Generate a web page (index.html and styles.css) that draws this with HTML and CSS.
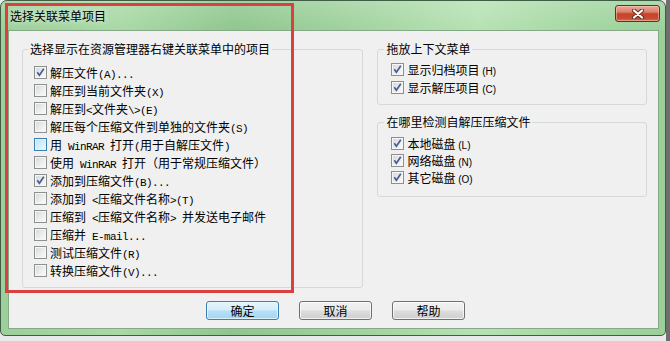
FILE: index.html
```html
<!DOCTYPE html>
<html lang="zh-CN">
<head>
<meta charset="utf-8">
<title>选择关联菜单项目</title>
<link rel="stylesheet" href="styles.css">
</head>
<body>
<div class="window">
  <div class="titlebar">
    <span class="title">选择关联菜单项目</span>
    <span class="close"><svg width="14" height="10" viewBox="0 0 14 10"><path d="M3 1.5 L11 8.5 M11 1.5 L3 8.5" stroke="#5a2a22" stroke-width="4" stroke-linecap="round"/><path d="M3 1.5 L11 8.5 M11 1.5 L3 8.5" stroke="#fff" stroke-width="2.2" stroke-linecap="round"/></svg></span>
  </div>
  <div class="client">
    <div class="groups">
      <fieldset class="group left">
        <legend>选择显示在资源管理器右键关联菜单中的项目</legend>
        <div class="row"><span class="cb on"><svg viewBox="0 0 11 11"><path d="M2.3 5.2 L4.4 8.3 L8.8 1.8"/></svg></span><span>解压文件<span class="l">(A)...</span></span></div>
        <div class="row"><span class="cb"></span><span>解压到当前文件夹<span class="l">(X)</span></span></div>
        <div class="row"><span class="cb"></span><span>解压到<span class="l">&lt;</span>文件夹<span class="l">\&gt;(E)</span></span></div>
        <div class="row"><span class="cb"></span><span>解压每个压缩文件到单独的文件夹<span class="l">(S)</span></span></div>
        <div class="row"><span class="cb hot"></span><span>用<span class="l"> WinRAR </span>打开<span class="l">(</span>用于自解压文件<span class="l">)</span></span></div>
        <div class="row"><span class="cb"></span><span>使用<span class="l"> WinRAR </span>打开（用于常规压缩文件）</span></div>
        <div class="row"><span class="cb on"><svg viewBox="0 0 11 11"><path d="M2.3 5.2 L4.4 8.3 L8.8 1.8"/></svg></span><span>添加到压缩文件<span class="l">(B)...</span></span></div>
        <div class="row"><span class="cb"></span><span>添加到<span class="l"> &lt;</span>压缩文件名称<span class="l">&gt;(T)</span></span></div>
        <div class="row"><span class="cb"></span><span>压缩到<span class="l"> &lt;</span>压缩文件名称<span class="l">&gt; </span>并发送电子邮件</span></div>
        <div class="row"><span class="cb"></span><span>压缩并<span class="l"> E-mail...</span></span></div>
        <div class="row"><span class="cb"></span><span>测试压缩文件<span class="l">(R)</span></span></div>
        <div class="row"><span class="cb"></span><span>转换压缩文件<span class="l">(V)...</span></span></div>
      </fieldset>
      <div class="right">
        <fieldset class="group drag">
          <legend>拖放上下文菜单</legend>
          <div class="row"><span class="cb on"><svg viewBox="0 0 11 11"><path d="M2.3 5.2 L4.4 8.3 L8.8 1.8"/></svg></span><span>显示归档项目<span class="s"> (H)</span></span></div>
          <div class="row"><span class="cb on"><svg viewBox="0 0 11 11"><path d="M2.3 5.2 L4.4 8.3 L8.8 1.8"/></svg></span><span>显示解压项目<span class="s"> (C)</span></span></div>
        </fieldset>
        <fieldset class="group detect">
          <legend>在哪里检测自解压压缩文件</legend>
          <div class="row r17"><span class="cb on"><svg viewBox="0 0 11 11"><path d="M2.3 5.2 L4.4 8.3 L8.8 1.8"/></svg></span><span>本地磁盘<span class="s"> (L)</span></span></div>
          <div class="row r17"><span class="cb on"><svg viewBox="0 0 11 11"><path d="M2.3 5.2 L4.4 8.3 L8.8 1.8"/></svg></span><span>网络磁盘<span class="s"> (N)</span></span></div>
          <div class="row r17"><span class="cb on"><svg viewBox="0 0 11 11"><path d="M2.3 5.2 L4.4 8.3 L8.8 1.8"/></svg></span><span>其它磁盘<span class="s"> (O)</span></span></div>
        </fieldset>
      </div>
    </div>
    <div class="buttons">
      <button class="btn default">确定</button>
      <button class="btn">取消</button>
      <button class="btn">帮助</button>
    </div>
  </div>
</div>
<div class="mark"></div>
</body>
</html>
```
FILE: styles.css
```css
html, body {
  margin: 0;
}
body {
  width: 670px;
  height: 341px;
  overflow: hidden;
  position: relative;
  background: linear-gradient(#6f6f6f, #6f6f6f) right top / 4px 100% no-repeat, #e9e9e9;
  font-family: "Noto Sans CJK SC", sans-serif;
  font-size: 12px;
  color: #000;
}
.window {
  width: 666px;
  height: 336px;
  box-sizing: border-box;
  border: 1px solid #3f5e44;
  border-radius: 7px 7px 5px 5px;
  background:
    linear-gradient(180deg, rgba(255,255,255,0.18), rgba(255,255,255,0) 30px),
    linear-gradient(90deg, #9ccf9a 0%, #a9d9a6 18%, #8fc68e 35%, #9dd09b 50%, #b6e2b3 72%, #a3d6a1 88%, #9bd09a 100%);
  display: flex;
  flex-direction: column;
  padding: 0 6px 6px 7px;
}
.titlebar {
  height: 29px;
  display: flex;
  justify-content: space-between;
  padding-left: 2px;
}
.title {
  align-self: center;
  line-height: 14px;
  margin-top: 1px;
  text-shadow: 0 0 6px rgba(255,255,255,0.9);
}
.close {
  width: 45px;
  height: 17px;
  margin-top: 4px;
  margin-right: -1px;
  box-sizing: border-box;
  border: 1px solid #6b2b20;
  border-radius: 3px;
  background: linear-gradient(#e9a898 0%, #dc826b 40%, #c7452a 52%, #c54a2e 80%, #d56a4d 100%);
  box-shadow: inset 0 0 0 1px rgba(255,220,210,0.45);
  display: flex;
  align-items: center;
  justify-content: center;
}
.client {
  flex: 1;
  box-sizing: border-box;
  background: #f0f0f0;
  border: 1px solid #86a886;
  padding: 11px 11px 0 13px;
  display: flex;
  flex-direction: column;
}
.groups {
  display: flex;
  gap: 14px;
}
.group {
  margin: 0;
  min-width: 0;
  box-sizing: border-box;
  border: 1px solid #d5d9dc;
  border-radius: 3px;
}
.group legend {
  line-height: 14px;
  padding: 0 2px;
}
.left {
  width: 342px;
  padding: 7px 0 8px 11px;
}
.left legend {
  margin-left: -6px;
}
.right {
  width: 270px;
  display: flex;
  flex-direction: column;
  gap: 10px;
}
.drag {
  padding: 4px 0 8px 13px;
}
.detect {
  padding: 6px 0 10px 13px;
}
.drag legend, .detect legend {
  margin-left: -7px;
}
.row {
  height: 18px;
  display: flex;
  align-items: center;
  gap: 3px;
  white-space: pre;
}
.r17 {
  height: 17px;
}
.l {
  font-family: "Liberation Mono", monospace;
  font-size: 11px;
  letter-spacing: -0.6px;
}
.s {
  font-family: "Liberation Sans", sans-serif;
  font-size: 10px;
}
.cb {
  width: 13px;
  height: 13px;
  flex: none;
  box-sizing: border-box;
  border: 1px solid #8e8f8f;
  background: linear-gradient(135deg, #d3d5d8 0%, #eceded 55%, #fbfbfb 100%);
  box-shadow: inset 0 0 0 1px #f6f6f6;
  display: flex;
}
.cb svg {
  width: 11px;
  height: 11px;
}
.cb svg path {
  fill: none;
  stroke: #4a5d93;
  stroke-width: 1.7;
}
.cb.hot {
  border-color: #3c7fb1;
  background: linear-gradient(135deg, #b9e2f6 0%, #d6effb 55%, #eef9fe 100%);
  box-shadow: inset 0 0 0 1px #def3fd;
}
.buttons {
  display: flex;
  gap: 20px;
  margin-top: 13px;
  padding-left: 184px;
}
.btn {
  width: 73px;
  height: 19px;
  box-sizing: border-box;
  padding: 0;
  border: 1px solid #707070;
  border-radius: 3px;
  background: linear-gradient(#f2f2f2 0%, #ebebeb 48%, #dddddd 52%, #cfcfcf 100%);
  box-shadow: inset 0 0 0 1px rgba(255,255,255,0.7);
  font-family: "Noto Sans CJK SC", sans-serif;
  font-size: 12px;
  line-height: 14px;
  color: #000;
  display: flex;
  align-items: center;
  justify-content: center;
}
.btn.default {
  border-color: #3c7fb1;
  background: linear-gradient(#e5f4fc 0%, #d4edfb 48%, #b7e0f6 52%, #a4d6f2 100%);
  box-shadow: inset 0 0 0 1px rgba(230,247,255,0.8);
}
.mark {
  position: absolute;
  left: 5px;
  top: 3px;
  width: 289px;
  height: 290px;
  box-sizing: border-box;
  border: 3px solid #d8413f;
  pointer-events: none;
}
```
